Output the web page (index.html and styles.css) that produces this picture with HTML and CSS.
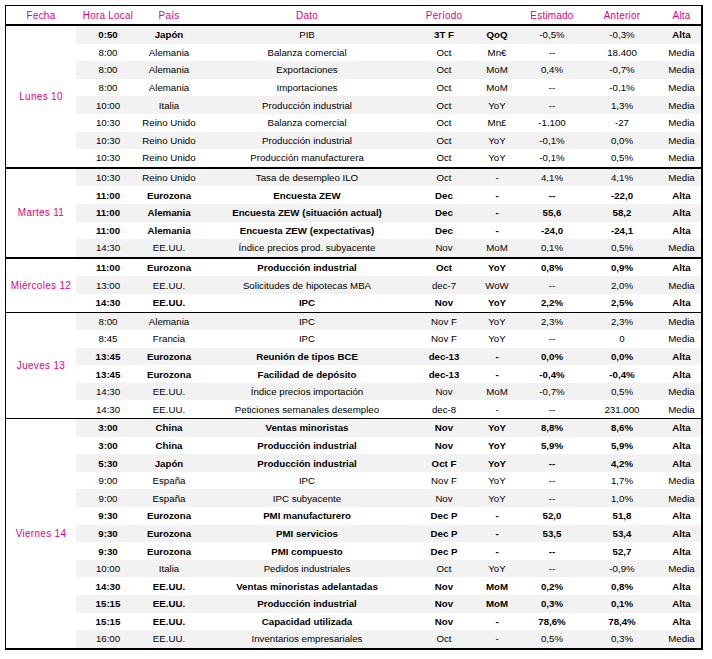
FILE: index.html
```html
<!DOCTYPE html>
<html lang="es">
<head>
<meta charset="utf-8">
<title>Calendario</title>
<link rel="stylesheet" href="styles.css">
</head>
<body>
<div class="sheet">
  <div class="head">
    <span>Fecha</span><span>Hora Local</span><span>País</span><span>Dato</span><span>Período</span><span></span><span>Estimado</span><span>Anterior</span><span>Alta</span>
  </div>

  <div class="group thick">
    <div class="date">Lunes 10</div>
    <div class="rows">
      <div class="row s"><span class="b">0:50</span><span class="b">Japón</span><span>PIB</span><span class="b">3T F</span><span class="b">QoQ</span><span>-0,5%</span><span>-0,3%</span><span class="b">Alta</span></div>
      <div class="row"><span>8:00</span><span>Alemania</span><span>Balanza comercial</span><span>Oct</span><span>Mn€</span><span>--</span><span>18.400</span><span>Media</span></div>
      <div class="row s"><span>8:00</span><span>Alemania</span><span>Exportaciones</span><span>Oct</span><span>MoM</span><span>0,4%</span><span>-0,7%</span><span>Media</span></div>
      <div class="row"><span>8:00</span><span>Alemania</span><span>Importaciones</span><span>Oct</span><span>MoM</span><span>--</span><span>-0,1%</span><span>Media</span></div>
      <div class="row s"><span>10:00</span><span>Italia</span><span>Producción industrial</span><span>Oct</span><span>YoY</span><span>--</span><span>1,3%</span><span>Media</span></div>
      <div class="row"><span>10:30</span><span>Reino Unido</span><span>Balanza comercial</span><span>Oct</span><span>Mn£</span><span>-1.100</span><span>-27</span><span>Media</span></div>
      <div class="row s"><span>10:30</span><span>Reino Unido</span><span>Producción industrial</span><span>Oct</span><span>YoY</span><span>-0,1%</span><span>0,0%</span><span>Media</span></div>
      <div class="row"><span>10:30</span><span>Reino Unido</span><span>Producción manufacturera</span><span>Oct</span><span>YoY</span><span>-0,1%</span><span>0,5%</span><span>Media</span></div>
    </div>
  </div>

  <div class="group thick">
    <div class="date">Martes 11</div>
    <div class="rows">
      <div class="row s"><span>10:30</span><span>Reino Unido</span><span>Tasa de desempleo ILO</span><span>Oct</span><span>-</span><span>4,1%</span><span>4,1%</span><span>Media</span></div>
      <div class="row bold"><span>11:00</span><span>Eurozona</span><span>Encuesta ZEW</span><span>Dec</span><span>-</span><span>--</span><span>-22,0</span><span>Alta</span></div>
      <div class="row s bold"><span>11:00</span><span>Alemania</span><span>Encuesta ZEW (situación actual)</span><span>Dec</span><span>-</span><span>55,6</span><span>58,2</span><span>Alta</span></div>
      <div class="row bold"><span>11:00</span><span>Alemania</span><span>Encuesta ZEW (expectativas)</span><span>Dec</span><span>-</span><span>-24,0</span><span>-24,1</span><span>Alta</span></div>
      <div class="row s"><span>14:30</span><span>EE.UU.</span><span>Índice precios prod. subyacente</span><span>Nov</span><span>MoM</span><span>0,1%</span><span>0,5%</span><span>Media</span></div>
    </div>
  </div>

  <div class="group thin">
    <div class="date">Miércoles 12</div>
    <div class="rows">
      <div class="row bold"><span>11:00</span><span>Eurozona</span><span>Producción industrial</span><span>Oct</span><span>YoY</span><span>0,8%</span><span>0,9%</span><span>Alta</span></div>
      <div class="row s"><span>13:00</span><span>EE.UU.</span><span>Solicitudes de hipotecas MBA</span><span>dec-7</span><span>WoW</span><span>--</span><span>2,0%</span><span>Media</span></div>
      <div class="row bold"><span>14:30</span><span>EE.UU.</span><span>IPC</span><span>Nov</span><span>YoY</span><span>2,2%</span><span>2,5%</span><span>Alta</span></div>
    </div>
  </div>

  <div class="group thin">
    <div class="date">Jueves 13</div>
    <div class="rows">
      <div class="row s"><span>8:00</span><span>Alemania</span><span>IPC</span><span>Nov F</span><span>YoY</span><span>2,3%</span><span>2,3%</span><span>Media</span></div>
      <div class="row"><span>8:45</span><span>Francia</span><span>IPC</span><span>Nov F</span><span>YoY</span><span>--</span><span>0</span><span>Media</span></div>
      <div class="row s bold"><span>13:45</span><span>Eurozona</span><span>Reunión de tipos BCE</span><span>dec-13</span><span>-</span><span>0,0%</span><span>0,0%</span><span>Alta</span></div>
      <div class="row bold"><span>13:45</span><span>Eurozona</span><span>Facilidad de depósito</span><span>dec-13</span><span>-</span><span>-0,4%</span><span>-0,4%</span><span>Alta</span></div>
      <div class="row s"><span>14:30</span><span>EE.UU.</span><span>Índice precios importación</span><span>Nov</span><span>MoM</span><span>-0,7%</span><span>0,5%</span><span>Media</span></div>
      <div class="row"><span>14:30</span><span>EE.UU.</span><span>Peticiones semanales desempleo</span><span>dec-8</span><span>-</span><span>--</span><span>231.000</span><span>Media</span></div>
    </div>
  </div>

  <div class="group last">
    <div class="date">Viernes 14</div>
    <div class="rows">
      <div class="row s bold"><span>3:00</span><span>China</span><span>Ventas minoristas</span><span>Nov</span><span>YoY</span><span>8,8%</span><span>8,6%</span><span>Alta</span></div>
      <div class="row bold"><span>3:00</span><span>China</span><span>Producción industrial</span><span>Nov</span><span>YoY</span><span>5,9%</span><span>5,9%</span><span>Alta</span></div>
      <div class="row s bold"><span>5:30</span><span>Japón</span><span>Producción industrial</span><span>Oct F</span><span>YoY</span><span>--</span><span>4,2%</span><span>Alta</span></div>
      <div class="row"><span>9:00</span><span>España</span><span>IPC</span><span>Nov F</span><span>YoY</span><span>--</span><span>1,7%</span><span>Media</span></div>
      <div class="row s"><span>9:00</span><span>España</span><span>IPC subyacente</span><span>Nov</span><span>YoY</span><span>--</span><span>1,0%</span><span>Media</span></div>
      <div class="row bold"><span>9:30</span><span>Eurozona</span><span>PMI manufacturero</span><span>Dec P</span><span>-</span><span>52,0</span><span>51,8</span><span>Alta</span></div>
      <div class="row s bold"><span>9:30</span><span>Eurozona</span><span>PMI servicios</span><span>Dec P</span><span>-</span><span>53,5</span><span>53,4</span><span>Alta</span></div>
      <div class="row bold"><span>9:30</span><span>Eurozona</span><span>PMI compuesto</span><span>Dec P</span><span>-</span><span>--</span><span>52,7</span><span>Alta</span></div>
      <div class="row s"><span>10:00</span><span>Italia</span><span>Pedidos industriales</span><span>Oct</span><span>YoY</span><span>--</span><span>-0,9%</span><span>Media</span></div>
      <div class="row bold"><span>14:30</span><span>EE.UU.</span><span>Ventas minoristas adelantadas</span><span>Nov</span><span>MoM</span><span>0,2%</span><span>0,8%</span><span>Alta</span></div>
      <div class="row s bold"><span>15:15</span><span>EE.UU.</span><span>Producción industrial</span><span>Nov</span><span>MoM</span><span>0,3%</span><span>0,1%</span><span>Alta</span></div>
      <div class="row bold"><span>15:15</span><span>EE.UU.</span><span>Capacidad utilizada</span><span>Nov</span><span>-</span><span>78,6%</span><span>78,4%</span><span>Alta</span></div>
      <div class="row s"><span>16:00</span><span>EE.UU.</span><span>Inventarios empresariales</span><span>Oct</span><span>-</span><span>0,5%</span><span>0,3%</span><span>Media</span></div>
    </div>
  </div>
</div>
</body>
</html>
```

FILE: styles.css
```css
html, body {
  margin: 0;
  padding: 0;
  background: #ffffff;
}

body {
  font-family: "Liberation Sans", Arial, sans-serif;
  font-size: 9.7px;
  color: #000000;
}

.sheet {
  margin: 5px 0 0 5px;
  width: 695px;
  border-top: 1px solid #000;
  border-left: 1px solid #000;
  border-right: 2px solid #000;
  border-bottom: 2px solid #000;
}

.head {
  display: grid;
  grid-template-columns: 70px 64px 58px 218px 56px 50px 60px 80px 39px;
  height: 18px;
  align-items: center;
  border-bottom: 2px solid #000;
  color: #e5007e;
  font-size: 10px;
  letter-spacing: 0.2px;
}

.head span,
.row span {
  text-align: center;
  white-space: nowrap;
}

.group {
  display: flex;
}

.group.thick {
  border-bottom: 2px solid #000;
}

.group.thin {
  border-bottom: 1px solid #000;
}

.date {
  width: 70px;
  flex: 0 0 70px;
  display: flex;
  align-items: center;
  justify-content: center;
  color: #e5007e;
  font-size: 10px;
  letter-spacing: 0.3px;
}

.rows {
  flex: 1;
  display: flex;
  flex-direction: column;
}

.row {
  display: grid;
  grid-template-columns: 64px 58px 218px 56px 50px 60px 80px 39px;
  height: 17.6px;
  align-items: center;
}

.row.s {
  background: #f2f2f2;
}

.row.bold span,
.row .b {
  font-weight: bold;
}
```
